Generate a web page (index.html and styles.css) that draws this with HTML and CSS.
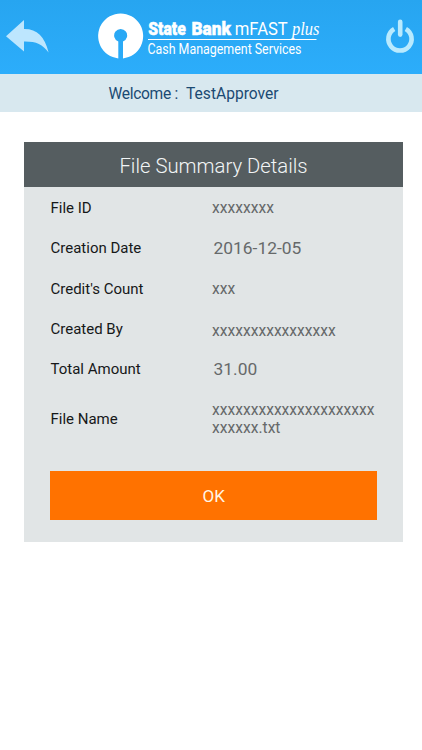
FILE: index.html
```html
<!DOCTYPE html>
<html lang="en">
<head>
<meta charset="utf-8">
<title>File Summary Details</title>
<link rel="stylesheet" href="styles.css">
</head>
<body>
<header class="topbar">
  <svg class="back" width="44" height="34" viewBox="0 0 44 34" role="img" aria-label="Back">
    <path d="M0 16.2 18 0V9C31 8.8 38.5 16 42.6 32.5 36.5 24 30 21.2 18 21.4V31.4Z"/>
  </svg>
  <svg class="logo" width="232" height="50" viewBox="0 0 232 50">
    <path d="M20.3 45.4A22.5 22.5 0 1 1 25 45.4V28.6A6.5 6.5 0 1 0 20.3 28.6Z"/>
    <text class="brand" x="50.2" y="21.5" textLength="37.5" lengthAdjust="spacingAndGlyphs">State</text>
    <text class="brand" x="93.4" y="21.5" textLength="39.5" lengthAdjust="spacingAndGlyphs">Bank</text>
    <text class="product" x="136.8" y="21.8" textLength="53" lengthAdjust="spacingAndGlyphs">mFAST</text>
    <text class="plus" x="194" y="21.8" textLength="27.5" lengthAdjust="spacingAndGlyphs">plus</text>
    <rect x="50" y="26" width="168.5" height="1"/>
    <text class="tagline" x="49.5" y="41.3" textLength="154" lengthAdjust="spacingAndGlyphs">Cash Management Services</text>
  </svg>
  <svg class="power" width="30" height="38" viewBox="0 0 30 38" role="img" aria-label="Log out">
    <path d="M9.2 11.9A11.6 11.6 0 1 0 20.8 11.9"/>
    <path class="stem" d="M15.2 4.8V17.6"/>
  </svg>
</header>
<div class="welcome"><span class="greeting">Welcome :</span><span>TestApprover</span></div>
<main class="card">
  <h1>File Summary Details</h1>
  <dl>
    <div class="row"><dt>File ID</dt><dd>xxxxxxxx</dd></div>
    <div class="row"><dt>Creation Date</dt><dd class="number">2016-12-05</dd></div>
    <div class="row"><dt>Credit's Count</dt><dd class="low">xxx</dd></div>
    <div class="row"><dt>Created By</dt><dd class="lower">xxxxxxxxxxxxxxxx</dd></div>
    <div class="row"><dt>Total Amount</dt><dd class="number">31.00</dd></div>
    <div class="row tall"><dt>File Name</dt><dd>xxxxxxxxxxxxxxxxxxxxx<br>xxxxxx.txt</dd></div>
  </dl>
  <button type="button">OK</button>
</main>
</body>
</html>
```
FILE: styles.css
```css
* { box-sizing: border-box; }
body {
  margin: 0;
  background: #fff;
  font-family: Roboto, "Liberation Sans", sans-serif;
}
.topbar {
  display: flex;
  align-items: flex-start;
  height: 74px;
  padding: 0 7px 0 6px;
  background: linear-gradient(#27a5f0, #2cadfb);
}
.back { margin-top: 20px; fill: #bde6fe; }
.logo { margin: 13px 0 0 48px; fill: #fff; }
.brand { font: 900 19px "Roboto", sans-serif; stroke: #fff; stroke-width: .5px; }
.product { font-size: 18px; stroke: none; }
.plus { font: italic 19px "Liberation Serif", serif; }
.tagline { font-size: 14px; }
.power {
  margin: 17px 0 0 auto;
  fill: none;
  stroke: #b9eafe;
  stroke-width: 4.6;
}
.stem { stroke-linecap: round; }
.welcome {
  display: flex;
  justify-content: center;
  gap: 8px;
  height: 38px;
  padding-right: 35px;
  line-height: 40px;
  background: #d8e8ef;
  color: #1b4a73;
  font-size: 15.6px;
}
.greeting { letter-spacing: -.3px; }
.card {
  width: 379px;
  height: 400px;
  margin: 30px 0 0 24px;
  background: #e1e5e6;
}
h1 {
  height: 45px;
  margin: 0;
  background: #555d60;
  color: #f2f5f6;
  font-size: 20.3px;
  font-weight: 300;
  line-height: 48px;
  text-align: center;
}
dl { margin: 0; padding: 1px 26px 0 26.5px; }
.row {
  display: grid;
  grid-template-columns: 161.5px 1fr;
  align-items: center;
  height: 40.3px;
}
.tall { height: 60px; }
dt { color: #161819; font-size: 15px; }
dd {
  margin: 0;
  color: #66696a;
  font-size: 15.6px;
  line-height: 18.5px;
}
.number { padding-left: 1.5px; font-size: 17.4px; }
.low { padding-top: 2px; }
.lower { padding-top: 4px; }
button {
  display: block;
  width: 326.5px;
  height: 49px;
  margin: 21.5px 0 0 26.4px;
  padding: 2px 0 0;
  border: 0;
  background: #ff7200;
  color: #fff5e6;
  font: 17px Roboto, sans-serif;
}
```
